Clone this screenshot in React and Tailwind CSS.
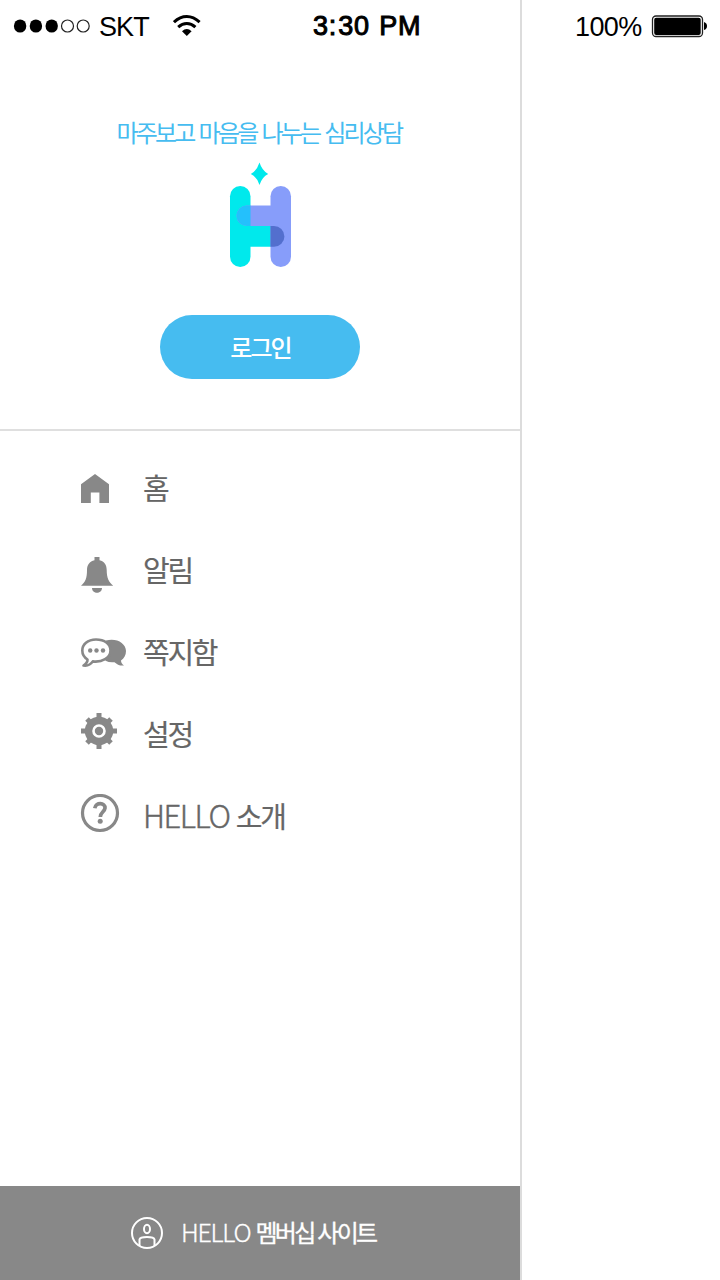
const kr = "font-['Noto_Sans_CJK_KR','Noto_Sans',sans-serif] whitespace-nowrap";

function StatusBar() {
  return (
    <header className="absolute inset-x-0 top-0 z-10 flex h-[52px] items-center font-['Liberation_Sans',sans-serif] text-black">
      <div className="flex w-[313px] items-center">
        <svg className="ml-[13px] h-[16px] w-[80px]" viewBox="0 0 80 16">
          <g fill="#000">
            <ellipse cx="7.1" cy="8" rx="6.2" ry="6.6" />
            <ellipse cx="22.9" cy="8" rx="6.2" ry="6.6" />
            <ellipse cx="38.7" cy="8" rx="6.2" ry="6.6" />
          </g>
          <g fill="none" stroke="#222" strokeWidth="1.2">
            <circle cx="54.5" cy="8" r="6" />
            <circle cx="70.2" cy="8" r="6" />
          </g>
        </svg>
        <span className="ml-[6px] w-[55px] pt-px text-[27px] leading-[52px] tracking-[-0.9px]">SKT</span>
        <svg className="ml-[19px] h-[22px] w-[28px]" viewBox="0 0 28 22">
          <g fill="none" stroke="#000" strokeWidth="3">
            <path d="M1 7.2Q7 1.600 13.800 1.600T26.600 7.200" />
            <path d="M5.200 12.200Q9.200 8.400 13.800 8.400T22.400 12.200" />
          </g>
          <path d="M9 16.200Q13.800 12 18.600 16.200L13.800 21Z" />
        </svg>
      </div>
      <span className="w-[262px] whitespace-nowrap text-[27px] leading-[52px] tracking-[0.7px] [word-spacing:1.500px] [-webkit-text-stroke:1px_#000]">
        3<span className="tracking-[2px]">:</span>30 PM
      </span>
      <span className="w-[76px] pt-px text-[27px] leading-[52px] tracking-[-0.6px]">100%</span>
      <svg className="h-[24px] w-[56px]" viewBox="0 0 56 24">
        <rect x="1.5" y="2" width="50" height="20.5" rx="3.5" fill="#fff" stroke="#222" strokeWidth="1.3" />
        <rect x="3.2" y="3.7" width="46.5" height="17.2" rx="2" fill="#000" />
        <path d="M53 8Q56 9 56 12T53 16Z" />
      </svg>
    </header>
  );
}

function Logo() {
  return (
    <svg className="mt-[14px] h-[106px] w-[64px]" viewBox="0 0 64 106">
      <path d="M31.500 .5Q34 8.500 40.200 12Q34 15 31.500 23Q29 15 22.800 12Q29 8.500 31.500 .5Z" fill="#00e9ec" />
      <rect x="2" y="24" width="20.5" height="81" rx="10.25" fill="#00e9ec" />
      <path d="M20 64H46.500a10.400 10.400 0 0 1 0 20.800H20Z" fill="#00e9ec" />
      <path d="M44 43.500H18.800a10.300 10.300 0 0 0 0 20.600H44Z" fill="#879dfa" />
      <rect x="42.5" y="24" width="20.5" height="81" rx="10.25" fill="#879dfa" />
      <path d="M22.500 43.500H18.800a10.300 10.300 0 0 0 0 20.600H22.500Z" fill="#24c0fc" />
      <path d="M42.500 64H46a10.400 10.400 0 0 1 0 20.800H42.500Z" fill="#536fce" />
    </svg>
  );
}

function HomeIcon() {
  return (
    <svg className="mt-[2px] h-[48px] w-[48px]" viewBox="0 0 48 48" fill="#888">
      <path d="M1 18.200L15 8L29 18.200V37H19.400V26.500H10.800V37H1Z" />
    </svg>
  );
}

function BellIcon() {
  return (
    <svg className="mt-[2px] h-[48px] w-[48px]" viewBox="0 0 48 48" fill="#888">
      <path d="M14.500 9h5v3.300c5 1.200 7.200 4.800 7.200 9.800 0 8 2 12 6.500 15.700H1C5.500 34 7 30 7 22c0-5 2.500-8.500 7.500-9.700ZM12 40h10c0 6.300-10 6.300-10 0Z" />
    </svg>
  );
}

function ChatIcon() {
  return (
    <svg className="mt-[2px] h-[48px] w-[48px]" viewBox="0 0 48 48" fill="#888">
      <path d="M26 10.500C36 7.500 46 13 46 21c0 4-2 7.500-5 9.500 0 2 1.200 3.700 3 5-4 .5-7-1-9.500-3.300q-5 .7-9-1.500Z" />
      <path d="M16 9.500C7.500 9.500 2.300 14.500 2.300 20.500c0 4 2.100 7 5.200 9 .2 2.700-2 4.700-4 6 4 .6 7.500-1.400 9.300-4.100C22 32.500 30.500 28 30.500 20.500c0-6.500-6-11-14.500-11Z" fill="#fff" stroke="#888" strokeWidth="2.600" strokeLinejoin="round" />
      <circle cx="10.200" cy="20.500" r="2.200" />
      <circle cx="16.500" cy="20.500" r="2.200" />
      <circle cx="23" cy="20.500" r="2.200" />
    </svg>
  );
}

function GearIcon() {
  return (
    <svg className="mt-[2px] h-[48px] w-[48px]" viewBox="0 0 48 48" fill="#888">
      <circle cx="19" cy="19" r="14.200" />
      <g stroke="#888" strokeWidth="5">
        <path d="M19 1V37M1 19H37M7 7L31 31M31 7L7 31" />
      </g>
      <circle cx="19" cy="19" r="5.500" fill="#888" stroke="#fff" strokeWidth="2.600" />
    </svg>
  );
}

function HelpIcon() {
  return (
    <svg className="mt-[2px] h-[48px] w-[48px]" viewBox="0 0 48 48">
      <circle cx="20" cy="19" r="17.500" fill="none" stroke="#888" strokeWidth="3.200" />
      <path d="M14.800 14.200C15.500 8 25.500 8.300 25 14.200C24.700 17.800 20.500 18 20.300 23" fill="none" stroke="#888" strokeWidth="3.700" />
      <circle cx="20.200" cy="27.300" r="2.500" fill="#888" />
    </svg>
  );
}

const items = [
  { Icon: HomeIcon, label: "홈" },
  { Icon: BellIcon, label: "알림" },
  { Icon: ChatIcon, label: "쪽지함" },
  { Icon: GearIcon, label: "설정" },
  { Icon: HelpIcon, brand: "HELLO", label: "소개" },
];

export default function App() {
  return (
    <div className="relative h-[1280px] w-[720px] overflow-hidden bg-white">
      <StatusBar />
      <aside className="flex h-full w-[522px] flex-col border-r-2 border-[#dcdcdc]">
        <section className="flex h-[431px] flex-col items-center border-b-2 border-[#dfdfdf] pt-[116px]">
          <p className={`${kr} h-[32px] w-[287px] text-[24px] leading-[32px] tracking-[-2.800px] [word-spacing:2.400px] text-[#46bcf0]`}>마주보고 마음을 나누는 심리상담</p>
          <Logo />
          <button className={`${kr} mt-[47px] flex h-[64px] w-[200px] items-center justify-center rounded-full bg-[#46bcf0] pb-px pl-px text-[24px] font-medium leading-[62px] tracking-[-1.900px] text-white`}>로그인</button>
        </section>
        <nav className="flex-1 pt-[17px]">
          {items.map(({ Icon, brand, label }) => (
            <a key={label} className="flex h-[82px] items-center pl-[80px] text-[#666]">
              <Icon />
              <span className={`${kr} ml-[15px] pb-[4px] text-[29px] leading-[78px] tracking-[-2.300px] [-webkit-text-stroke:0.2px_#666]`}>
                {brand && <span className="mr-px text-[31px] font-light leading-none tracking-[-1.500px] [-webkit-text-stroke:0.4px_#666]">{brand} </span>}
                {label}
              </span>
            </a>
          ))}
        </nav>
        <footer className="flex h-[94px] items-center bg-[#888] pl-[130px] text-white">
          <svg className="h-[34px] w-[34px]" viewBox="0 0 34 34" fill="none" stroke="#fff" strokeWidth="2">
            <circle cx="17" cy="17" r="15" />
            <ellipse cx="17" cy="13" rx="3" ry="4.300" />
            <path d="M9.500 30V23.500Q10 21 17 21T24.500 23.500V30" />
          </svg>
          <span className={`${kr} ml-[17px] pb-[3px] text-[24px] leading-[91px] tracking-[-2.700px] [word-spacing:1px] [-webkit-text-stroke:0.3px_#fff]`}>
            <span className="text-[25px] font-light leading-none tracking-[-1.300px]">HELLO </span>멤버십 사이트
          </span>
        </footer>
      </aside>
    </div>
  );
}
